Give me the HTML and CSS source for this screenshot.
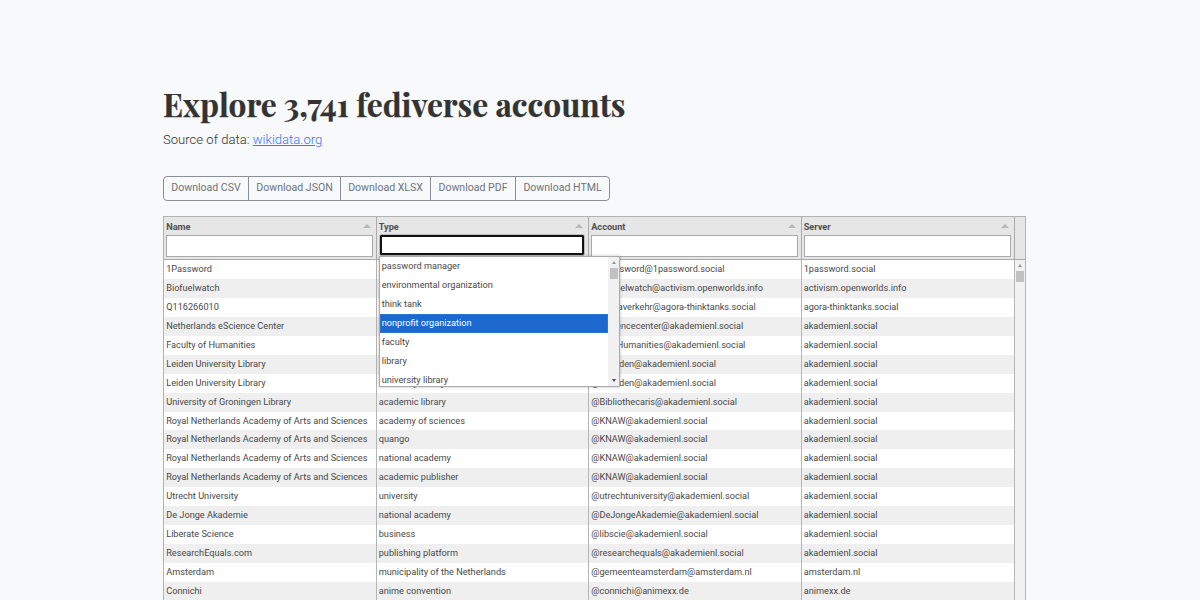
FILE: index.html
```html
<!DOCTYPE html>
<html lang="en">
<head>
<meta charset="utf-8">
<title>Explore fediverse accounts</title>
<link rel="stylesheet" href="styles.css">
</head>
<body>
<main class="page">
  <h1 class="title">Explore 3,741 fediverse accounts</h1>
  <p class="source">Source of data: <a href="#">wikidata.org</a></p>
  <div class="buttons">
    <button class="b1">Download CSV</button><button class="b2">Download JSON</button><button class="b3">Download XLSX</button><button class="b4">Download PDF</button><button class="b5">Download HTML</button>
  </div>
  <section class="table">
    <div class="header">
      <div class="col"><div class="label">Name<i class="sort"></i></div><div class="input"></div></div>
      <div class="col"><div class="label">Type<i class="sort"></i></div><div class="input focus"></div>
        <div class="menu">
          <ul class="options">
            <li>password manager</li><li>environmental organization</li><li>think tank</li><li class="active">nonprofit organization</li><li>faculty</li><li>library</li><li>university library</li>
          </ul>
          <div class="scroll"><i class="up"></i><i class="thumb"></i><i class="down"></i></div>
        </div>
      </div>
      <div class="col"><div class="label">Account<i class="sort"></i></div><div class="input"></div></div>
      <div class="col"><div class="label">Server<i class="sort"></i></div><div class="input"></div></div>
      <div class="corner"></div>
    </div>
    <div class="body">
      <div class="rows" id="rows"></div>
      <div class="scroll"><i class="up"></i><i class="thumb"></i></div>
    </div>
  </section>
</main>
<script src="app.js"></script>
</body>
</html>
```

FILE: styles.css
```css
* { box-sizing: border-box; }
body { margin: 0; height: 600px; overflow: hidden; background: #f8f9fb; color: #484848; font-family: Roboto, sans-serif; }
.page { width: 863px; margin-left: 163px; padding-top: 82px; }
.title { margin: 0; height: 44px; line-height: 44px; font-family: "Playfair Display", "Liberation Serif", serif; font-weight: 700; font-size: 31.65px; white-space: nowrap; color: #333; -webkit-text-stroke: 0.25px #333; }
.source { margin: 4px 0 0; height: 20px; line-height: 20px; font-size: 13.1px; font-weight: 300; color: #333; }
.source a { color: #3878ff; }
.buttons { display: flex; width: 447px; height: 25px; margin-top: 26px; border: 1px solid #899097; border-radius: 4px; }
.buttons button { padding: 0 0 2px; border: 0; border-right: 1px solid #899097; background: none; color: #6c757d; font: 10.55px Roboto, sans-serif; white-space: nowrap; }
.b1 { width: 85px; }
.b2 { width: 92px; }
.b3 { width: 90px; }
.b4 { width: 85px; }
.b5 { width: 93px; }
.buttons .b5 { border-right: 0; }
.table { margin-top: 15px; height: 384px; border: 1px solid #b3b3b3; border-bottom: 0; font-size: 9.18px; }
.header { display: grid; grid-template-columns: 212.5px 212.5px 212.5px 213px 1fr; height: 43px; border-bottom: 1px solid #aaa; background: #e6e6e6; }
.col { position: relative; padding: 0 3px 0 2.2px; border-right: 1px solid #aaa; }
.label { display: flex; justify-content: space-between; align-items: center; height: 18px; padding: 0 2px 0 0; font-weight: 700; color: #505050; }
.sort { border: 4px solid transparent; border-top: 0; border-bottom: 4px solid #b8b8b8; }
.input { height: 22px; background: #fff; border: 1px solid #aaa; }
.focus { border: 2px solid #111; height: 20px; margin: 0 1px 0 1px; outline: 1px solid #bbb; border-radius: 1px; }
.menu { position: absolute; z-index: 2; left: 2px; top: 39px; width: 241.5px; height: 131px; display: flex; overflow: hidden; background: #fff; border: 1px solid #aaa; box-shadow: 0 0 3px rgba(0,0,0,.25); }
.options { flex: 1; margin: 0; padding: 0; list-style: none; }
.options li { height: 18.97px; line-height: 18px; padding-left: 2.2px; }
.options .active { background: #1d68cd; color: #fff; box-shadow: inset 0 0 0 1px #2e75d5; }
.body { display: flex; height: 340px; overflow: hidden; }
.rows { width: 850.5px; flex: none; }
.row { display: grid; grid-template-columns: 212.5px 212.5px 212.5px 213px; height: 18.95px; line-height: 17.8px; background: #fff; }
.row:nth-child(even) { background: #efefef; }
.row span { padding-left: 2.2px; border-right: 1px solid #b5b5b5; white-space: nowrap; overflow: hidden; }
.scroll { display: flex; flex-direction: column; align-items: center; width: 11px; flex: 1; background: #f1f1f1; }
.menu .scroll { flex: none; }
.up { margin-top: 4px; border: 2.5px solid transparent; border-top: 0; border-bottom: 3px solid #999; }
.thumb { width: 8px; height: 11px; margin-top: 4px; background: #c1c1c1; }
.down { margin: auto 0 4px; border: 2.5px solid transparent; border-bottom: 0; border-top: 3px solid #505050; }
```

FILE: app.js
```js
const knaw = 'Royal Netherlands Academy of Arts and Sciences';
const accounts = [
  ['1Password', 'password manager', '@1password@1password.social'],
  ['Biofuelwatch', 'environmental organization', '@biofuelwatch@activism.openworlds.info'],
  ['Q116266010', 'think tank', '@agoraverkehr@agora-thinktanks.social'],
  ['Netherlands eScience Center', 'nonprofit organization', '@esciencecenter@akademienl.social'],
  ['Faculty of Humanities', 'faculty', '@LeidHumanities@akademienl.social'],
  ['Leiden University Library', 'library', '@ubleiden@akademienl.social'],
  ['Leiden University Library', 'university library', '@ubleiden@akademienl.social'],
  ['University of Groningen Library', 'academic library', '@Bibliothecaris@akademienl.social'],
  [knaw, 'academy of sciences', '@KNAW@akademienl.social'],
  [knaw, 'quango', '@KNAW@akademienl.social'],
  [knaw, 'national academy', '@KNAW@akademienl.social'],
  [knaw, 'academic publisher', '@KNAW@akademienl.social'],
  ['Utrecht University', 'university', '@utrechtuniversity@akademienl.social'],
  ['De Jonge Akademie', 'national academy', '@DeJongeAkademie@akademienl.social'],
  ['Liberate Science', 'business', '@libscie@akademienl.social'],
  ['ResearchEquals.com', 'publishing platform', '@researchequals@akademienl.social'],
  ['Amsterdam', 'municipality of the Netherlands', '@gemeenteamsterdam@amsterdam.nl'],
  ['Connichi', 'anime convention', '@connichi@animexx.de']
];
const rows = document.getElementById('rows');
for (const account of accounts) {
  const row = document.createElement('div');
  row.className = 'row';
  for (const text of [...account, account[2].split('@').pop()]) {
    const cell = document.createElement('span');
    cell.textContent = text;
    row.append(cell);
  }
  rows.append(row);
}
```
